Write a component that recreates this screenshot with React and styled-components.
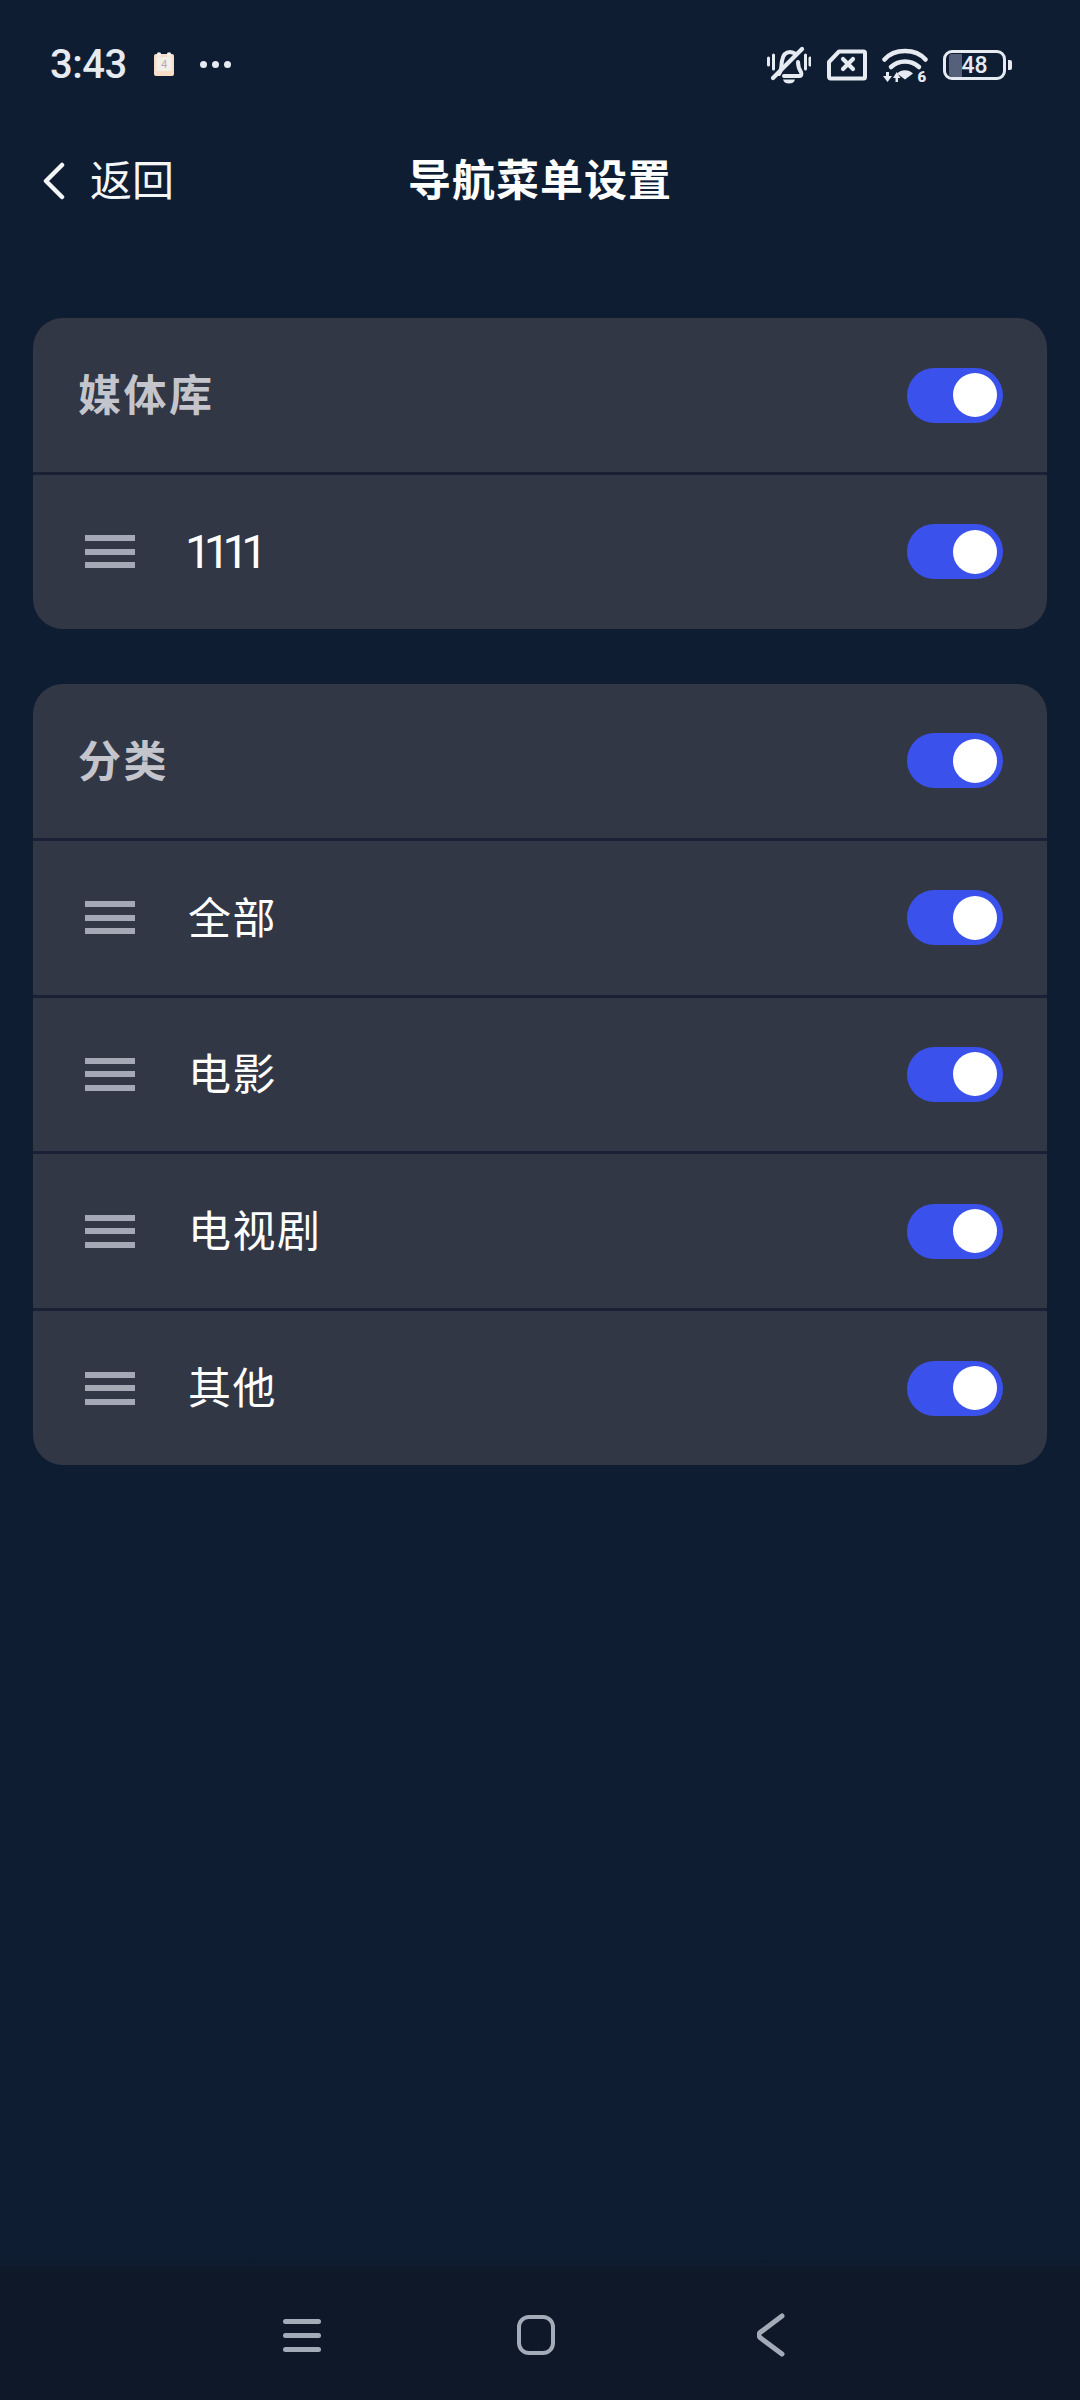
import React from "react";
import styled, { createGlobalStyle } from "styled-components";

const Global = createGlobalStyle`
  html, body { margin: 0; padding: 0; background: #0f1d33; }
  * { box-sizing: border-box; }
`;

const CJK = `"Noto Sans CJK SC", "Noto Sans", sans-serif`;

const Page = styled.div`
  width: 1080px;
  height: 2400px;
  display: flex;
  flex-direction: column;
  background: #0f1d33;
  font-family: ${CJK};
  color: #fff;
  overflow: hidden;
`;

const StatusBar = styled.div`
  height: 126px;
  padding: 0 68px 0 50px;
  display: flex;
  align-items: flex-start;
  justify-content: space-between;
`;

const StatusLeft = styled.div`
  display: flex;
  align-items: center;
  height: 130px;
`;

const Clock = styled.span`
  font-family: Roboto, sans-serif;
  font-size: 40px;
  font-weight: 500;
  letter-spacing: -0.5px;
  line-height: 130px;
  color: #e6eaf1;
  width: 103px;
`;

const CalendarSlot = styled.span`
  display: block;
  margin-bottom: 3px;
`;

const Dots = styled.div`
  display: flex;
  gap: 5px;
  margin-left: 25px;
  margin-bottom: 2px;
`;

const Dot = styled.i`
  width: 7px;
  height: 7px;
  border-radius: 50%;
  background: #e6eaf1;
`;

const StatusRight = styled.div`
  display: flex;
  align-items: center;
  height: 130px;
`;

const IconSlot = styled.svg`
  display: block;
  flex: none;
  margin-left: ${(p) => p.$gap || 0}px;
`;

const Battery = styled.div`
  position: relative;
  width: 63px;
  height: 30px;
  margin-left: 15px;
  border: 3.5px solid #e6eaf1;
  border-radius: 9px;
  display: flex;
  align-items: center;
  justify-content: center;
  font-family: Roboto, sans-serif;
  font-size: 23px;
  font-weight: 500;
  color: #e6eaf1;
  overflow: hidden;
`;

const BatteryFill = styled.span`
  position: absolute;
  left: 2.5px;
  top: 0.5px;
  bottom: 0.5px;
  width: 13px;
  background: #56607a;
  border-radius: 3px 0 0 3px;
`;

const BatteryLabel = styled.span`
  position: relative;
  line-height: 1;
`;

const BatteryTip = styled.span`
  width: 4px;
  height: 10px;
  margin-left: 2px;
  background: #e6eaf1;
  border-radius: 0 2px 2px 0;
`;

const Header = styled.div`
  position: relative;
  height: 192px;
  padding-bottom: 90px;
  display: flex;
  align-items: center;
  justify-content: center;
`;

const Back = styled.div`
  position: absolute;
  left: 42px;
  top: 0;
  height: 102px;
  display: flex;
  align-items: center;
  font-size: 42px;
  color: #f4f5f7;
`;

const BackMark = styled.span`
  display: block;
  margin-top: 8px;
`;

const BackLabel = styled.span`
  margin-left: 24px;
`;

const Title = styled.h1`
  margin: 0;
  font-size: 43px;
  font-weight: 700;
  letter-spacing: 1px;
  line-height: 1;
`;

const Content = styled.div`
  flex: 1;
  padding: 0 33px;
  display: flex;
  flex-direction: column;
  gap: 55px;
`;

const Card = styled.section`
  background: #323745;
  border-radius: 30px;
  display: flex;
  flex-direction: column;
  overflow: hidden;
`;

const Row = styled.div`
  height: ${(p) => (p.$first ? 154 : 156.8)}px;
  padding: 0 44px 0 ${(p) => (p.$section ? 45 : 52)}px;
  border-top: ${(p) => (p.$first ? "none" : "3px solid #1a2036")};
  display: flex;
  align-items: center;
`;

const SectionLabel = styled.span`
  flex: 1;
  font-size: 43px;
  font-weight: 700;
  color: #c4c5cc;
  letter-spacing: 2.5px;
  padding-bottom: 6px;
`;

const Handle = styled.div`
  width: 50px;
  height: 33px;
  margin-right: 53px;
  display: flex;
  flex-direction: column;
  justify-content: space-between;
`;

const HandleBar = styled.span`
  height: 6px;
  background: #a5a9b5;
`;

const ItemLabel = styled.span`
  flex: 1;
  font-size: 43px;
  font-weight: 400;
  letter-spacing: 1.5px;
  color: #fff;
  padding-bottom: 6px;
`;

const NumberLabel = styled.span`
  flex: 1;
  font-family: Roboto, sans-serif;
  font-size: 47px;
  font-weight: 400;
  letter-spacing: -7.7px;
  color: #fff;
  margin-left: -3px;
`;

const Toggle = styled.div`
  width: 96px;
  height: 55px;
  flex: none;
  border-radius: 28px;
  background: #3b51ec;
  display: flex;
  align-items: center;
  justify-content: flex-end;
  padding-right: 6px;
`;

const Knob = styled.span`
  width: 44px;
  height: 44px;
  border-radius: 50%;
  background: #fff;
`;

const NavBar = styled.div`
  height: 145px;
  padding-top: 15px;
  background: linear-gradient(#0f1d33 0, #0e1828 20px);
  display: flex;
  align-items: center;
`;

const NavHamburger = styled.div`
  width: 38px;
  height: 33px;
  margin-left: 283px;
  display: flex;
  flex-direction: column;
  justify-content: space-between;
`;

const NavLine = styled.span`
  height: 5px;
  border-radius: 3px;
  background: #a4abb8;
`;

const NavSquare = styled.div`
  width: 38px;
  height: 40px;
  margin-left: 196px;
  border: 4.5px solid #a4abb8;
  border-radius: 12px;
`;

const BellIcon = () => (
  <IconSlot width="44" height="38" viewBox="0 0 44 38" fill="none" stroke="#e6eaf1" strokeLinecap="round">
    <path d="M1.500 12v7M6.500 9v14M38.500 9v14M43 12v7" strokeWidth="3" />
    <path d="M12 28c3-4 2-8 3-13 1-6 4-9 8-9 2 0 4 1 6 2M31 16c0 4 1 7 3 10 1 3 0 4-2 4H17" strokeWidth="4" strokeLinejoin="round" />
    <path d="M6 32 35 3" strokeWidth="4.200" />
    <path d="M16 33.500h12c-1 3-3 4-6 4s-5-1-6-4z" fill="#e6eaf1" stroke="none" />
  </IconSlot>
);

const SimIcon = () => (
  <IconSlot $gap={16} width="40" height="32" viewBox="0 0 40 32" fill="none" stroke="#e6eaf1" strokeLinecap="round" strokeLinejoin="round">
    <path d="M2 13 12 2.500h24.500c.8 0 1.500.7 1.500 1.500v24c0 .8-.7 1.500-1.500 1.500h-33C2.700 29.500 2 28.800 2 28z" strokeWidth="4" />
    <path d="M16 10l10 10M26 10 16 20" strokeWidth="4.200" />
  </IconSlot>
);

const WifiIcon = () => (
  <IconSlot $gap={15} width="46" height="40" viewBox="0 -2 46 40" fill="none">
    <g stroke="#e6eaf1" strokeWidth="4.500" strokeLinecap="round">
      <path d="M2.500 12.500C12 1 34 1 43.500 12.500" />
      <path d="M9 20c8-7.500 20-7.500 28 0" />
    </g>
    <path d="M15 26.500c4-4.500 12-4.500 16 0l-8 6z" fill="#e6eaf1" />
    <path d="M1 29h3v-4h3v4h3l-4.500 6z" fill="#e6eaf1" />
    <path d="M11 31h2.500v4h2.500v-4h2.500l-3.750-6z" fill="#e6eaf1" />
    <text x="35.500" y="34.500" fontFamily="Roboto, sans-serif" fontSize="15" fontWeight="900" fill="#e6eaf1">6</text>
  </IconSlot>
);

const CalendarIcon = () => (
  <CalendarSlot>
    <IconSlot width="22" height="24" viewBox="0 0 22 24">
      <rect x="1" y="2" width="20" height="22" rx="2" fill="#f6dfc6" />
      <rect x="3.500" y="5" width="15" height="14" fill="#f2efe9" />
      <circle cx="6" cy="2.500" r="2.200" fill="#f4f1ea" />
      <circle cx="16" cy="2.500" r="2.200" fill="#f4f1ea" />
      <text x="11" y="16" textAnchor="middle" fontFamily="Roboto, sans-serif" fontSize="11" fill="#b9a6c4">4</text>
    </IconSlot>
  </CalendarSlot>
);

const BackChevron = () => (
  <BackMark>
    <IconSlot width="24" height="38" viewBox="0 0 24 38" fill="none" stroke="#f4f5f7" strokeWidth="4.500" strokeLinecap="round" strokeLinejoin="round">
      <path d="M20 3 4 19l16 16" />
    </IconSlot>
  </BackMark>
);

const NavChevron = () => (
  <IconSlot $gap={202} width="28" height="44" viewBox="0 0 28 44" fill="none" stroke="#a4abb8" strokeWidth="5" strokeLinecap="round" strokeLinejoin="round">
    <path d="M25 3 3 19.500c-1.200 1.200-1.200 3.800 0 5L25 41" />
  </IconSlot>
);

const Switch = () => (
  <Toggle>
    <Knob />
  </Toggle>
);

const DragHandle = () => (
  <Handle>
    <HandleBar />
    <HandleBar />
    <HandleBar />
  </Handle>
);

const ItemRow = ({ label, numeric }) => (
  <Row>
    <DragHandle />
    {numeric ? <NumberLabel>{label}</NumberLabel> : <ItemLabel>{label}</ItemLabel>}
    <Switch />
  </Row>
);

const Section = ({ title, items }) => (
  <Card>
    <Row $first $section>
      <SectionLabel>{title}</SectionLabel>
      <Switch />
    </Row>
    {items.map((it) => (
      <ItemRow key={it} label={it} numeric={/^\d+$/.test(it)} />
    ))}
  </Card>
);

export default function App() {
  return (
    <Page>
      <Global />
      <StatusBar>
        <StatusLeft>
          <Clock>3:43</Clock>
          <CalendarIcon />
          <Dots>
            <Dot />
            <Dot />
            <Dot />
          </Dots>
        </StatusLeft>
        <StatusRight>
          <BellIcon />
          <SimIcon />
          <WifiIcon />
          <Battery>
            <BatteryFill />
            <BatteryLabel>48</BatteryLabel>
          </Battery>
          <BatteryTip />
        </StatusRight>
      </StatusBar>
      <Header>
        <Back>
          <BackChevron />
          <BackLabel>返回</BackLabel>
        </Back>
        <Title>导航菜单设置</Title>
      </Header>
      <Content>
        <Section title="媒体库" items={["1111"]} />
        <Section title="分类" items={["全部", "电影", "电视剧", "其他"]} />
      </Content>
      <NavBar>
        <NavHamburger>
          <NavLine />
          <NavLine />
          <NavLine />
        </NavHamburger>
        <NavSquare />
        <NavChevron />
      </NavBar>
    </Page>
  );
}
